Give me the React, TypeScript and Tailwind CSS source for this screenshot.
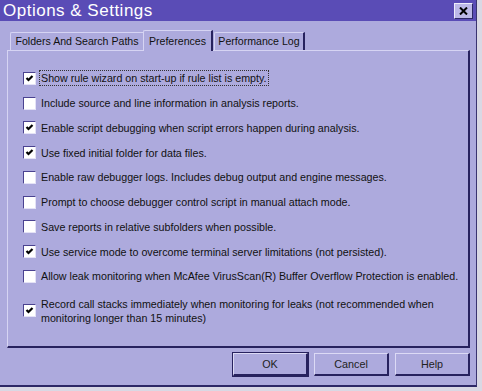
import React from "react";

const items: { label: React.ReactNode; checked: boolean; focus?: boolean }[] = [
  { label: "Show rule wizard on start-up if rule list is empty.", checked: true, focus: true },
  { label: "Include source and line information in analysis reports.", checked: false },
  { label: "Enable script debugging when script errors happen during analysis.", checked: true },
  { label: "Use fixed initial folder for data files.", checked: true },
  { label: "Enable raw debugger logs. Includes debug output and engine messages.", checked: false },
  { label: "Prompt to choose debugger control script in manual attach mode.", checked: false },
  { label: "Save reports in relative subfolders when possible.", checked: false },
  { label: "Use service mode to overcome terminal server limitations (not persisted).", checked: true },
  { label: "Allow leak monitoring when McAfee VirusScan(R) Buffer Overflow Protection is enabled.", checked: false },
];

function Box({ checked }: { checked: boolean }) {
  return (
    <div className="w-[13px] h-[13px] shrink-0 bg-white border-t border-l border-t-[#4a4290] border-l-[#4a4290] border-r border-b border-r-[#e4e2f6] border-b-[#e4e2f6] flex items-center justify-center">
      {checked && (
        <svg width="9" height="9" viewBox="0 0 9 9">
          <path d="M1.5 4 L3.5 6 L7.5 2" stroke="#000" strokeWidth="2.2" fill="none" />
        </svg>
      )}
    </div>
  );
}

function Btn({ children, def }: { children: React.ReactNode; def?: boolean }) {
  return (
    <div
      className={
        "w-[75px] h-[23px] flex items-center justify-center text-[10.8px] text-[#222] bg-[#adaadd] border-t border-l border-t-[#dcdaf5] border-l-[#dcdaf5] border-r-2 border-b-2 border-r-[#27225e] border-b-[#27225e]" +
        (def ? " outline outline-1 outline-[#27225e]" : "")
      }
    >
      {children}
    </div>
  );
}

export default function App() {
  return (
    <div
      className="w-[482px] h-[391px] bg-[#d9d8e4] overflow-hidden"
      style={{ fontFamily: '"Liberation Sans", Arial, sans-serif' }}
    >
      <div className="w-[477px] h-[387px] bg-[#adaadd] border-r border-b-2 border-r-[#3a3470] border-b-[#2d2866] flex flex-col">
        {/* Title bar */}
        <div className="h-[21px] bg-[#5a4cb6] flex items-center justify-between pl-[3px] pr-[3px]">
          <span className="text-white text-[17px] leading-none tracking-[0.5px]">Options &amp; Settings</span>
          <div className="w-[19px] h-[16px] bg-[#bcb8e8] border-t border-l border-t-[#eeedfb] border-l-[#eeedfb] border-r border-b border-r-[#2d2866] border-b-[#2d2866] flex items-center justify-center">
            <svg width="9" height="8" viewBox="0 0 9 8">
              <path d="M1 0.5 L8 7.5 M8 0.5 L1 7.5" stroke="#000" strokeWidth="2" />
            </svg>
          </div>
        </div>

        {/* Tabs */}
        <div className="flex items-end h-[29px] pl-[10px]">
          <div className="w-[134px] h-[18px] flex items-center justify-center text-[10.6px] text-[#111] border-t border-l border-t-[#d6d4f3] border-l-[#d6d4f3] border-r border-r-[#8e89c4] rounded-tl-[2px] whitespace-nowrap">
            Folders And Search Paths
          </div>
          <div className="w-[70px] h-[21px] -ml-px flex items-start justify-center pt-[3px] text-[10.6px] text-[#111] border-t border-l border-t-[#d6d4f3] border-l-[#d6d4f3] border-r-2 border-r-[#27225e] bg-[#adaadd] relative top-px rounded-tl-[2px] whitespace-nowrap">
            Preferences
          </div>
          <div className="w-[91px] ml-px h-[18px] flex items-center justify-center text-[10.6px] text-[#111] border-t border-l border-t-[#d6d4f3] border-l-[#d6d4f3] border-r-2 border-r-[#27225e] rounded-tl-[2px] whitespace-nowrap">
            Performance Log
          </div>
        </div>

        {/* Panel */}
        <div className="ml-[7px] w-[463px] h-[298px] border-t border-l border-t-[#d6d4f3] border-l-[#d6d4f3] border-r-2 border-b-2 border-r-[#27225e] border-b-[#27225e] pl-[15px] pt-[15px]">
          <div className="flex flex-col">
            {items.map((it, i) => (
              <div key={i} className="h-[24.75px] flex items-center gap-[4px]">
                <Box checked={it.checked} />
                <span
                  className={
                    "text-[10.7px] leading-[14px] text-[#111] px-px whitespace-nowrap " +
                    (it.focus ? "outline outline-1 outline-dotted outline-[#333]" : "")
                  }
                >
                  {it.label}
                </span>
              </div>
            ))}
            <div className="mt-[8px] flex items-center gap-[4px]">
              <Box checked={true} />
              <span className="text-[10.7px] leading-[14px] text-[#111] px-px w-[420px]">
                Record call stacks immediately when monitoring for leaks (not recommended when monitoring longer than 15 minutes)
              </span>
            </div>
          </div>
        </div>

        {/* Buttons */}
        <div className="flex justify-end gap-[6px] pr-[6px] mt-[5px]">
          <Btn def>OK</Btn>
          <Btn>Cancel</Btn>
          <Btn>Help</Btn>
        </div>
      </div>
    </div>
  );
}
